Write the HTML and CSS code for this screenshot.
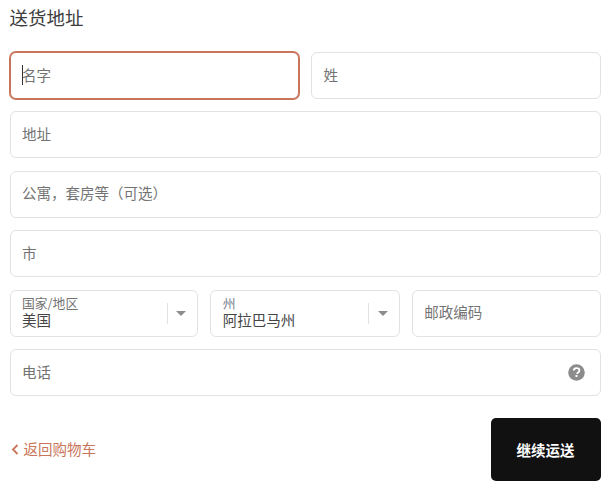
FILE: index.html
```html
<!DOCTYPE html>
<html lang="zh-CN">
<head>
<meta charset="utf-8">
<title>送货地址</title>
<link rel="stylesheet" href="styles.css">
</head>
<body>
<main class="page">
  <h2 class="title">送货地址</h2>
  <form class="form">
    <div class="row row-name">
      <div class="field field-focus"><span class="caret"></span><span class="ph">名字</span></div>
      <div class="field"><span class="ph">姓</span></div>
    </div>
    <div class="field"><span class="ph">地址</span></div>
    <div class="field"><span class="ph">公寓，套房等（可选）</span></div>
    <div class="field"><span class="ph">市</span></div>
    <div class="row row-region">
      <div class="field select">
        <div class="select-text"><span class="sel-label">国家/地区</span><span class="sel-value">美国</span></div>
        <span class="sep"></span><span class="arrow"></span>
      </div>
      <div class="field select select-state">
        <div class="select-text"><span class="sel-label sel-label-muted">州</span><span class="sel-value">阿拉巴马州</span></div>
        <span class="sep"></span><span class="arrow"></span>
      </div>
      <div class="field"><span class="ph">邮政编码</span></div>
    </div>
    <div class="field field-phone">
      <span class="ph ph-low">电话</span>
      <svg class="help" width="17" height="17" viewBox="0 0 17 17" aria-hidden="true">
        <circle cx="8.5" cy="8.5" r="8.3" fill="#8c8c8c"/>
        <path d="M5.8 6.6c0-1.6 1.2-2.5 2.8-2.5 1.600 0 2.800.9 2.800 2.300 0 1.100-.6 1.700-1.400 2.200-.6.4-.8.7-.8 1.300" fill="none" stroke="#fff" stroke-width="1.800"/>
        <rect x="7.500" y="11" width="2" height="2" fill="#fff"/>
      </svg>
    </div>
    <div class="actions">
      <a class="back" href="#">
        <svg class="chev" width="8" height="11" viewBox="0 0 8 11" aria-hidden="true"><path d="M6.500 1 2 5.500 6.500 10" fill="none" stroke="#c9755a" stroke-width="1.800"/></svg>
        <span class="back-text">返回购物车</span>
      </a>
      <button class="submit" type="button">继续运送</button>
    </div>
  </form>
</main>
</body>
</html>
```
FILE: styles.css
```css
* { box-sizing: border-box; }
html, body { margin: 0; padding: 0; background: #fff; }
body {
  font-family: "Liberation Sans", "Noto Sans CJK SC", sans-serif;
  color: #333;
}
.page { padding: 7px 9.4px 0 9.6px; }
.title {
  margin: 0 0 21px;
  font-size: 18.500px;
  line-height: 24px;
  font-weight: 400;
  color: #3d3d3d;
}
.form { display: flex; flex-direction: column; gap: 12.400px; }
.row { display: grid; }
.row-name { grid-template-columns: 289.400px 1fr; column-gap: 12px; }
.row-region { grid-template-columns: 188.400px 189.400px 1fr; column-gap: 12.300px; }
.field {
  position: relative;
  display: flex;
  align-items: center;
  height: 47px;
  padding: 0 11.400px;
  border: 1px solid #e2e2e2;
  border-radius: 6px;
  background: #fff;
}
.field-focus { border-color: #c9755a; box-shadow: 0 0 0 1px #c9755a; }
.caret { position: absolute; left: 11.400px; top: 12px; width: 1px; height: 20px; background: #333; }
.ph { font-size: 14.500px; line-height: 20px; color: #737373; }
.ph-low { padding-top: 2px; }
.select { padding-right: 0; }
.select-text { display: flex; flex-direction: column; flex: 1; min-width: 0; padding-top: 1px; }
.sel-label {
  font-family: "Noto Sans CJK SC", sans-serif;
  font-size: 12.800px;
  line-height: 14px;
  color: #737373;
}
.sel-label-muted { color: #77818e; }
.sel-value { margin-top: 2px; font-size: 14.500px; line-height: 19px; color: #444; }
.sep { width: 1px; height: 21px; background: #e2e2e2; flex: none; }
.arrow {
  flex: none;
  margin: 0 11px 0 8px;
  width: 0;
  height: 0;
  border-left: 5px solid transparent;
  border-right: 5px solid transparent;
  border-top: 5px solid #8c8c8c;
}
.select-state .arrow { margin-left: 9px; }
.field-phone { justify-content: space-between; padding-right: 15px; }
.help { display: block; flex: none; }
.actions {
  display: flex;
  justify-content: space-between;
  align-items: center;
  margin-top: 9.600px;
}
.back {
  display: flex;
  align-items: center;
  gap: 5px;
  margin-left: 1px;
  font-size: 14.500px;
  line-height: 20px;
  color: #c9755a;
  text-decoration: none;
}
.back-text { padding-top: 2px; }
.chev { display: block; }
.submit {
  width: 110px;
  height: 63px;
  border: 0;
  border-radius: 5px;
  background: #111;
  color: #fff;
  font-family: inherit;
  font-size: 14.500px;
  font-weight: 700;
}
```
